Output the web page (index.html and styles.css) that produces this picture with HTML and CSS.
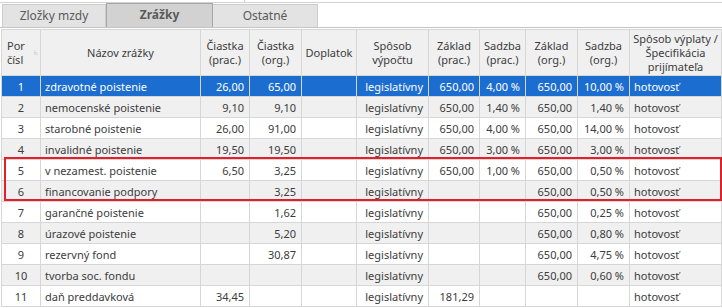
FILE: index.html
```html
<!DOCTYPE html>
<html>
<head>
	<title>Zrážky</title>
	<meta charset="utf-8">
	<link rel="stylesheet" href="styles.css">
</head>
<body>
<div class="topbar"><span class="tick"></span></div>
<div class="tabs">
	<div class="tab">Zložky mzdy</div>
	<div class="tab active">Zrážky</div>
	<div class="tab last">Ostatné</div>
</div>
<div class="grid">
<table>
	<colgroup>
		<col class="c-nr"><col class="c-name"><col class="c-a"><col class="c-b"><col class="c-c">
		<col class="c-d"><col class="c-e"><col class="c-f"><col class="c-g"><col class="c-h"><col class="c-i">
	</colgroup>
	<thead>
		<tr>
			<th class="left"><div class="sort"><span>Por<br>čísl</span>
				<svg width="8" height="7" viewBox="0 0 8 7"><path d="M0 0.5h2M0 3.5h5M0 6.5h8" stroke="#a9b5ad" stroke-width="1"/></svg>
			</div></th>
			<th>Názov zrážky</th>
			<th>Čiastka<br>(prac.)</th>
			<th>Čiastka<br>(org.)</th>
			<th>Doplatok</th>
			<th>Spôsob<br>výpočtu</th>
			<th>Základ<br>(prac.)</th>
			<th>Sadzba<br>(prac.)</th>
			<th>Základ<br>(org.)</th>
			<th>Sadzba<br>(org.)</th>
			<th>Spôsob výplaty /<br>Špecifikácia<br>prijímateľa</th>
		</tr>
	</thead>
	<tbody>
		<tr class="sel"><td class="c">1</td><td>zdravotné poistenie</td><td class="r">26,00</td><td class="r">65,00</td><td></td><td class="r">legislatívny</td><td class="r">650,00</td><td class="r">4,00 %</td><td class="r">650,00</td><td class="r">10,00 %</td><td>hotovosť</td></tr>
		<tr><td class="c">2</td><td>nemocenské poistenie</td><td class="r">9,10</td><td class="r">9,10</td><td></td><td class="r">legislatívny</td><td class="r">650,00</td><td class="r">1,40 %</td><td class="r">650,00</td><td class="r">1,40 %</td><td>hotovosť</td></tr>
		<tr><td class="c">3</td><td>starobné poistenie</td><td class="r">26,00</td><td class="r">91,00</td><td></td><td class="r">legislatívny</td><td class="r">650,00</td><td class="r">4,00 %</td><td class="r">650,00</td><td class="r">14,00 %</td><td>hotovosť</td></tr>
		<tr><td class="c">4</td><td>invalidné poistenie</td><td class="r">19,50</td><td class="r">19,50</td><td></td><td class="r">legislatívny</td><td class="r">650,00</td><td class="r">3,00 %</td><td class="r">650,00</td><td class="r">3,00 %</td><td>hotovosť</td></tr>
		<tr><td class="c">5</td><td>v nezamest. poistenie</td><td class="r">6,50</td><td class="r">3,25</td><td></td><td class="r">legislatívny</td><td class="r">650,00</td><td class="r">1,00 %</td><td class="r">650,00</td><td class="r">0,50 %</td><td>hotovosť</td></tr>
		<tr><td class="c">6</td><td>financovanie podpory</td><td></td><td class="r">3,25</td><td></td><td class="r">legislatívny</td><td></td><td></td><td class="r">650,00</td><td class="r">0,50 %</td><td>hotovosť</td></tr>
		<tr><td class="c">7</td><td>garančné poistenie</td><td></td><td class="r">1,62</td><td></td><td class="r">legislatívny</td><td></td><td></td><td class="r">650,00</td><td class="r">0,25 %</td><td>hotovosť</td></tr>
		<tr><td class="c">8</td><td>úrazové poistenie</td><td></td><td class="r">5,20</td><td></td><td class="r">legislatívny</td><td></td><td></td><td class="r">650,00</td><td class="r">0,80 %</td><td>hotovosť</td></tr>
		<tr><td class="c">9</td><td>rezervný fond</td><td></td><td class="r">30,87</td><td></td><td class="r">legislatívny</td><td></td><td></td><td class="r">650,00</td><td class="r">4,75 %</td><td>hotovosť</td></tr>
		<tr><td class="c">10</td><td>tvorba soc. fondu</td><td></td><td></td><td></td><td class="r">legislatívny</td><td></td><td></td><td class="r">650,00</td><td class="r">0,60 %</td><td>hotovosť</td></tr>
		<tr><td class="c">11</td><td>daň preddavková</td><td class="r">34,45</td><td></td><td></td><td class="r">legislatívny</td><td class="r">181,29</td><td></td><td></td><td></td><td>hotovosť</td></tr>
	</tbody>
</table>
<div class="mark"></div>
</div>
</body>
</html>
```

FILE: styles.css
```css
*{
	margin: 0px;
	padding: 0px;
	box-sizing: border-box;
}
body{
	width: 722px;
	height: 308px;
	overflow: hidden;
	background-color: #fff;
	font-family: "Noto Sans", "Open Sans", sans-serif;
	font-size: 11px;
	color: #3c3c3c;
}
.topbar{
	position: relative;
	height: 3px;
	border-bottom: 1px solid #d2d2d2;
}
.tick{
	position: absolute;
	left: 244px;
	top: 0px;
	width: 1px;
	height: 3px;
	background-color: #d2d2d2;
}
.tabs{
	display: flex;
	align-items: flex-end;
	height: 25px;
	padding-left: 2px;
	border-bottom: 1px solid #c4c4c4;
	font-size: 12px;
}
.tab{
	width: 104px;
	height: 23px;
	line-height: 21px;
	text-align: center;
	color: #5a5a5a;
	background-color: #e3e3e3;
	border: 1px solid #cdcdcd;
	border-bottom: none;
}
.tab.active{
	width: 107px;
	height: 24px;
	line-height: 22px;
	font-weight: bold;
	background-color: #d2d2d2;
	border-color: #a6a6a6;
}
.tab.last{
	width: 105px;
	border-left: none;
}
.grid{
	position: relative;
	margin-top: 1px;
	margin-left: 1px;
}
table{
	width: 721px;
	border-collapse: collapse;
	table-layout: fixed;
}
col.c-nr{ width: 39px; }
col.c-name{ width: 160px; }
col.c-a{ width: 49px; }
col.c-b{ width: 52px; }
col.c-c{ width: 55px; }
col.c-d{ width: 72px; }
col.c-e{ width: 51px; }
col.c-f{ width: 46px; }
col.c-g{ width: 52px; }
col.c-h{ width: 52px; }
col.c-i{ width: 92px; }
th{
	height: 46px;
	font-weight: normal;
	line-height: 14px;
	text-align: center;
	background-color: #f0f0f0;
	border: 1px solid #d6d6d6;
	padding: 0px 2px;
	white-space: nowrap;
}
th.left{
	text-align: left;
	padding-left: 5px;
}
.sort{
	display: flex;
	align-items: center;
	gap: 9px;
}
td{
	height: 21px;
	line-height: 19px;
	padding: 0px 4px 0px 4px;
	border: 1px solid #d6d6d6;
	white-space: nowrap;
	overflow: hidden;
}
td.c{
	text-align: center;
}
td.r{
	text-align: right;
	padding-right: 5px;
}
tbody tr:nth-child(even){
	background-color: #f0f0f0;
}
tr.sel td{
	background-color: #1c6dd0;
	color: #fff;
}
.mark{
	position: absolute;
	left: 3px;
	top: 128px;
	width: 718px;
	height: 44px;
	border: 2px solid #e3202a;
}
```
